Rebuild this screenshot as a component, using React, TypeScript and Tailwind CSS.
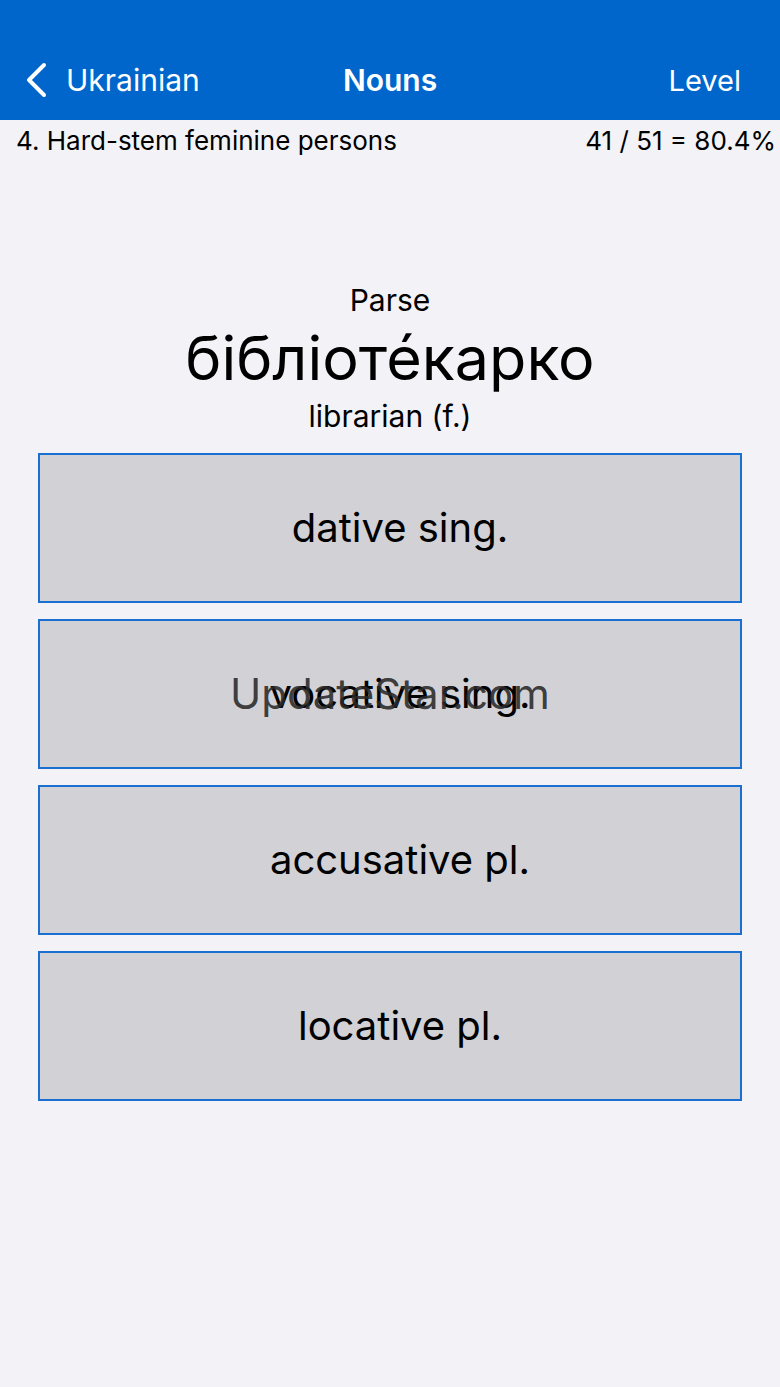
import React from 'react';

const choices = ['dative sing.', 'vocative sing.', 'accusative pl.', 'locative pl.'];

const ChoiceButton: React.FC<{ label: string; watermark?: boolean }> = ({ label, watermark }) => (
  <div className="relative h-[150px] border-2 border-[#1a6fd1] bg-[#d1d1d6] flex items-center justify-center pl-5">
    <span className="text-[40px] leading-none text-black">{label}</span>
    {watermark && (
      <span className="absolute inset-0 flex items-center justify-center text-[42px] leading-none text-[#2a2a2a]/90">
        UpdateStar.com
      </span>
    )}
  </div>
);

const App: React.FC = () => {
  return (
    <div className="w-[780px] h-[1387px] bg-[#f2f2f7] font-['Inter','Liberation_Sans',sans-serif] overflow-hidden">
      <div className="h-[120px] bg-[#0066cc] relative flex items-center pt-[40px] text-white">
        <div className="flex items-center pl-[24px] gap-[18px] flex-1">
          <svg width="24" height="36" viewBox="0 0 24 36" fill="none">
            <path d="M20 3 L5 18 L20 33" stroke="white" strokeWidth="4" strokeLinecap="round" strokeLinejoin="round" />
          </svg>
          <span className="text-[30px] leading-none">Ukrainian</span>
        </div>
        <span className="absolute left-0 right-0 top-[40px] bottom-0 flex items-center justify-center text-[30px] font-semibold leading-none pointer-events-none">
          Nouns
        </span>
        <span className="pr-[39px] text-[29px] leading-none">Level</span>
      </div>
      <div className="flex justify-between items-center h-[40px] pl-[16px] pr-[4px] text-[26px] text-black">
        <span>4. Hard-stem feminine persons</span>
        <span>41 / 51 = 80.4%</span>
      </div>
      <div className="flex flex-col items-center pt-[122px] text-black">
        <span className="text-[30px] leading-[36px]">Parse</span>
        <span className="text-[61px] leading-[80px]">бібліоте́карко</span>
        <span className="text-[30px] leading-[36px]">librarian (f.)</span>
      </div>
      <div className="flex flex-col gap-[16px] px-[38px] mt-[19px]">
        {choices.map((c, i) => (
          <ChoiceButton key={c} label={c} watermark={i === 1} />
        ))}
      </div>
    </div>
  );
};

export default App;
